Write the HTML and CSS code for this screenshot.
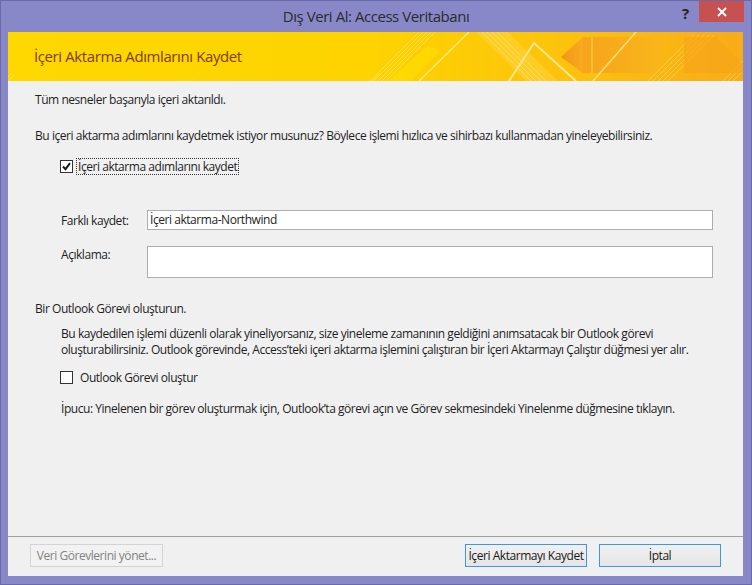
FILE: index.html
```html
<!DOCTYPE html>
<html lang="tr">
<head>
<meta charset="utf-8">
<title>Dış Veri Al: Access Veritabanı</title>
<link rel="stylesheet" href="styles.css">
</head>
<body>
<div class="window">
  <div class="titlebar">
    <div class="title">Dış Veri Al: Access Veritabanı</div>
    <div class="help">?</div>
    <div class="close">
      <svg width="12" height="10" viewBox="0 0 12 10"><path d="M2 1 L10 9 M10 1 L2 9" stroke="#fff" stroke-width="2" fill="none"/></svg>
    </div>
  </div>
  <div class="content">
    <div class="banner">
      <svg class="banner-art" width="735" height="49" viewBox="0 0 735 49">
        <defs>
          <linearGradient id="bg" x1="0" y1="0" x2="1" y2="0">
            <stop offset="0" stop-color="#ffd800"/>
            <stop offset="0.5" stop-color="#fed300"/>
            <stop offset="0.75" stop-color="#fcc30c"/>
            <stop offset="1" stop-color="#f8ac18"/>
          </linearGradient>
          <linearGradient id="arr" x1="0" y1="0" x2="1" y2="0">
            <stop offset="0" stop-color="#f3931a"/>
            <stop offset="1" stop-color="#f7ab20"/>
          </linearGradient>
          <linearGradient id="box" x1="0" y1="0" x2="1" y2="0">
            <stop offset="0" stop-color="#f6a41c"/>
            <stop offset="1" stop-color="#f9b61a"/>
          </linearGradient>
        </defs>
        <rect width="735" height="49" fill="url(#bg)"/>
        <g stroke="#ffe680" stroke-opacity="0.55" stroke-width="1">
          <path d="M362 49 L411 0 M366 49 L415 0 M370 49 L419 0 M374 49 L423 0 M378 49 L427 0"/>
          <path d="M0 49 L6 43 M0 45 L4 41 M364 49 L372 41"/>
        </g>
        <polygon points="380,49 402,49 432,19 420,14" fill="#ffe500" opacity="0.45"/>
        <path d="M411 49 L461 0" stroke="#ffe970" stroke-width="1.5"/>
        <polygon points="468,0 500,0 550,49 518,49" fill="#ffd64a" opacity="0.45"/>
        <g stroke="#ffe48a" stroke-opacity="0.6" stroke-width="1">
          <path d="M474 0 L523 49 M479 0 L528 49 M484 0 L533 49 M489 0 L538 49"/>
        </g>
        <polygon points="553,25 575,5 575,41" fill="url(#arr)"/>
        <rect x="575" y="5" width="80" height="36" fill="url(#box)"/>
        <path d="M584 5 V41" stroke="#fcc93a" stroke-width="1.5"/>
        <path d="M501 49 L526 11 L568 49" stroke="#ffe68a" stroke-width="2" fill="none"/>
        <path d="M585 49 L628 0" stroke="#ffe078" stroke-width="1.5"/>
        <g stroke="#ffd860" stroke-opacity="0.6" stroke-width="1">
          <path d="M640 49 L686 3 M645 49 L691 3 M650 49 L696 3 M655 49 L701 3 M660 49 L706 3"/>
          <path d="M715 49 L735 29 M720 49 L735 34 M725 49 L735 39"/>
        </g>
        <polygon points="676,5 708,5 735,32 735,41 676,41" fill="#f7a51a" opacity="0.7"/>
      </svg>
      <div class="banner-title">İçeri Aktarma Adımlarını Kaydet</div>
    </div>
    <div class="body">
      <p class="line l1">Tüm nesneler başarıyla içeri aktarıldı.</p>
      <p class="line l2">Bu içeri aktarma adımlarını kaydetmek istiyor musunuz? Böylece işlemi hızlıca ve sihirbazı kullanmadan yineleyebilirsiniz.</p>
      <label class="check-row cr1">
        <span class="box checked">
          <svg width="11" height="11" viewBox="0 0 11 11"><path d="M2 5.5 L4.5 8.2 L9 2.2" stroke="#1a1a1a" stroke-width="2" fill="none"/></svg>
        </span>
        <span class="check-label focused">İçeri aktarma adımlarını kaydet</span>
      </label>
      <div class="field-row fr1">
        <span class="field-label">Farklı kaydet:</span>
        <div class="input single">İçeri aktarma-Northwind</div>
      </div>
      <div class="field-row fr2">
        <span class="field-label top">Açıklama:</span>
        <div class="input multi"></div>
      </div>
      <p class="line l3">Bir Outlook Görevi oluşturun.</p>
      <p class="line para">Bu kaydedilen işlemi düzenli olarak yineliyorsanız, size yineleme zamanının geldiğini anımsatacak bir Outlook görevi<br>oluşturabilirsiniz. Outlook görevinde, Access’teki içeri aktarma işlemini çalıştıran bir İçeri Aktarmayı Çalıştır düğmesi yer alır.</p>
      <label class="check-row cr2">
        <span class="box"></span>
        <span class="check-label">Outlook Görevi oluştur</span>
      </label>
      <p class="line tip">İpucu: Yinelenen bir görev oluşturmak için, Outlook’ta görevi açın ve Görev sekmesindeki Yinelenme düğmesine tıklayın.</p>
    </div>
    <div class="footer">
      <button class="btn disabled">Veri Görevlerini yönet...</button>
      <div class="spacer"></div>
      <button class="btn primary">İçeri Aktarmayı Kaydet</button>
      <button class="btn primary">İptal</button>
    </div>
  </div>
</div>
</body>
</html>
```
FILE: styles.css
```css
* { box-sizing: border-box; }
html, body { margin: 0; padding: 0; }
body {
  width: 752px;
  height: 585px;
  overflow: hidden;
  font-family: "Open Sans", "Noto Sans", sans-serif;
  font-size: 12px;
  color: #1e1e1e;
  background: #8888c9;
}
.window {
  width: 752px;
  height: 585px;
  border: 1px solid #6a6aa6;
  background: #8888c9;
  display: flex;
  flex-direction: column;
}
.titlebar {
  height: 31px;
  position: relative;
  flex: none;
}
.title {
  text-align: center;
  font-size: 15px;
  line-height: 31px;
  color: #2b2b2b;
  letter-spacing: -0.45px;
}
.help {
  position: absolute;
  left: 681px;
  top: 3px;
  font-size: 15px;
  font-weight: bold;
  color: #222;
  line-height: 18px;
}
.close {
  position: absolute;
  left: 698px;
  top: 0;
  width: 45px;
  height: 21px;
  background: #c75050;
  display: flex;
  align-items: center;
  justify-content: center;
}
.content {
  flex: 1;
  margin: 0 8px 8px 7px;
  background: #f0f0f0;
  display: flex;
  flex-direction: column;
}
.banner {
  height: 49px;
  position: relative;
  flex: none;
  border-top: 1px solid #fff3a0;
}
.banner-art {
  position: absolute;
  left: 0;
  top: -1px;
  display: block;
}
.banner-title {
  position: relative;
  padding-left: 26px;
  line-height: 46px;
  font-size: 15px;
  color: #7d3d05;
  letter-spacing: -0.4px;
}
.body {
  padding: 11px 0 0 27px;
}
.line {
  margin: 0;
  line-height: 15px;
  letter-spacing: -0.45px;
}
.l2 { margin-top: 21px; }
.check-row {
  display: flex;
  align-items: center;
  height: 17px;
  margin-left: 25px;
}
.cr1 { margin-top: 15px; }
.box {
  width: 13px;
  height: 13px;
  border: 1px solid #333;
  background: #fff;
  display: flex;
  align-items: center;
  justify-content: center;
  flex: none;
}
.check-label {
  margin-left: 4px;
  padding: 0 1px;
  line-height: 15px;
  letter-spacing: -0.45px;
}
.check-label.focused { outline: 1px dotted #333; outline-offset: 0; }
.cr2 .check-label { margin-left: 6px; }
.field-row {
  display: flex;
  margin-left: 26px;
  margin-right: 30px;
}
.fr1 { margin-top: 35px; align-items: center; }
.fr2 { margin-top: 16px; align-items: flex-start; }
.field-label {
  width: 86px;
  flex: none;
  line-height: 15px;
  letter-spacing: -0.45px;
}
.field-label.top { padding-top: 1px; }
.input {
  flex: 1;
  background: #fff;
  border: 1px solid #abadb3;
  letter-spacing: -0.45px;
}
.single { height: 20px; line-height: 18px; padding-left: 2px; }
.multi { height: 32px; }
.l3 { margin-top: 23px; }
.para { margin-top: 10px; margin-left: 26px; line-height: 16px; }
.cr2 { margin-top: 11px; }
.tip { margin-top: 15px; margin-left: 26px; }
.footer {
  margin-top: auto;
  border-top: 1px solid #a0a0a0;
  padding: 7px 22px 9px 22px;
  display: flex;
  gap: 12px;
}
.spacer { flex: 1; }
.btn {
  height: 23px;
  font-family: inherit;
  font-size: 12px;
  letter-spacing: -0.45px;
  padding: 0;
  margin: 0;
}
.btn.disabled {
  width: 133px;
  border: 1px solid #d4d4d4;
  background: #f2f2f2;
  color: #838383;
}
.btn.primary {
  width: 122px;
  border: 1px solid #3c98e4;
  background: linear-gradient(#f0f0f0, #e5e5e5);
  color: #1a1a1a;
}
```
